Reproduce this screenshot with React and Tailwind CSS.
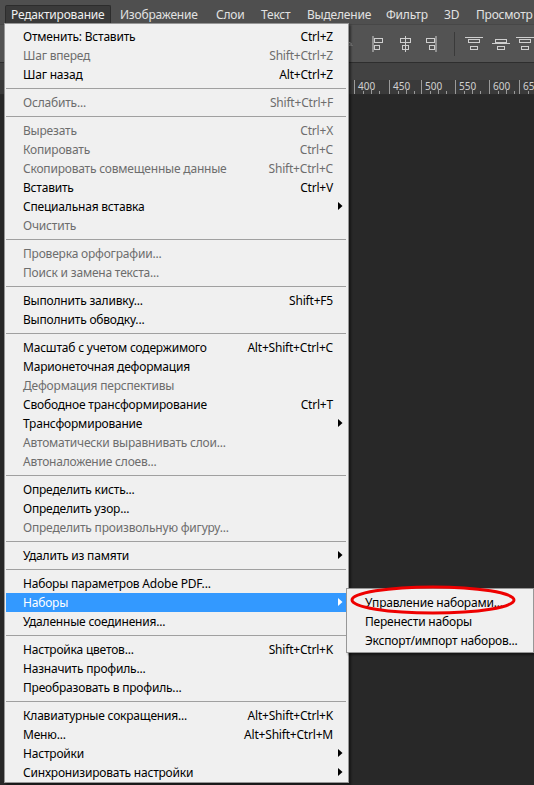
import React from 'react';

const FONT = { fontFamily: '"Noto Sans", "Open Sans", sans-serif' };

const TOP_MENU = [
  { label: 'Редактирование', w: 'w-[106px]', active: true },
  { label: 'Изображение', w: 'w-[96px]' },
  { label: 'Слои', w: 'w-[45px]' },
  { label: 'Текст', w: 'w-[46px]' },
  { label: 'Выделение', w: 'w-[79px]' },
  { label: 'Фильтр', w: 'w-[58px]' },
  { label: '3D', w: 'w-[32px]' },
  { label: 'Просмотр', w: 'w-[80px]' },
];

// '-' = separator; d = disabled; sub = has submenu; hl = highlighted
const EDIT_MENU = [
  { label: 'Отменить: Вставить', key: 'Ctrl+Z' },
  { label: 'Шаг вперед', key: 'Shift+Ctrl+Z', d: true },
  { label: 'Шаг назад', key: 'Alt+Ctrl+Z' },
  '-',
  { label: 'Ослабить...', key: 'Shift+Ctrl+F', d: true },
  '-',
  { label: 'Вырезать', key: 'Ctrl+X', d: true },
  { label: 'Копировать', key: 'Ctrl+C', d: true },
  { label: 'Скопировать совмещенные данные', key: 'Shift+Ctrl+C', d: true },
  { label: 'Вставить', key: 'Ctrl+V' },
  { label: 'Специальная вставка', sub: true },
  { label: 'Очистить', d: true },
  '-',
  { label: 'Проверка орфографии...', d: true },
  { label: 'Поиск и замена текста...', d: true },
  '-',
  { label: 'Выполнить заливку...', key: 'Shift+F5' },
  { label: 'Выполнить обводку...' },
  '-',
  { label: 'Масштаб с учетом содержимого', key: 'Alt+Shift+Ctrl+C' },
  { label: 'Марионеточная деформация' },
  { label: 'Деформация перспективы', d: true },
  { label: 'Свободное трансформирование', key: 'Ctrl+T' },
  { label: 'Трансформирование', sub: true },
  { label: 'Автоматически выравнивать слои...', d: true },
  { label: 'Автоналожение слоев...', d: true },
  '-',
  { label: 'Определить кисть...' },
  { label: 'Определить узор...' },
  { label: 'Определить произвольную фигуру...', d: true },
  '-',
  { label: 'Удалить из памяти', sub: true },
  '-',
  { label: 'Наборы параметров Adobe PDF...' },
  { label: 'Наборы', sub: true, hl: true },
  { label: 'Удаленные соединения...' },
  '-',
  { label: 'Настройка цветов...', key: 'Shift+Ctrl+K' },
  { label: 'Назначить профиль...' },
  { label: 'Преобразовать в профиль...' },
  '-',
  { label: 'Клавиатурные сокращения...', key: 'Alt+Shift+Ctrl+K' },
  { label: 'Меню...', key: 'Alt+Shift+Ctrl+M' },
  { label: 'Настройки', sub: true },
  { label: 'Синхронизировать настройки', sub: true },
];

const SUB_MENU = ['Управление наборами...', 'Перенести наборы', 'Экспорт/импорт наборов...'];

const RULER = [
  { n: '400', x: 'w-[35px]' },
  { n: '450', x: 'w-[32px]' },
  { n: '500', x: 'w-[34px]' },
  { n: '550', x: 'w-[34px]' },
  { n: '600', x: 'w-[30px]' },
  { n: '65', x: 'w-[20px]' },
];

function Arrow({ color }) {
  return (
    <svg width="5" height="8" viewBox="0 0 5 8" className="block">
      <path d="M0 0 L4.5 4 L0 8 Z" fill={color} />
    </svg>
  );
}

function MenuRow({ item }) {
  const text = item.hl ? 'text-white' : item.d ? 'text-[#6d6d6d]' : 'text-black';
  return (
    <div
      className={`flex items-center h-[19px] pl-[17px] whitespace-nowrap ${text} ${
        item.hl ? 'bg-[#3399ff]' : ''
      }`}
    >
      <span className="flex-1">{item.label}</span>
      <span>{item.key ?? ''}</span>
      <span className="w-[13px] flex justify-start pl-[5px] -mt-[2px]">
        {item.sub && <Arrow color={item.hl ? '#ffffff' : '#000000'} />}
      </span>
    </div>
  );
}

function AlignIcon({ variant }) {
  const c = '#cfcfcf';
  if (variant === 'left') {
    return (
      <svg width="13" height="16" viewBox="0 0 13 16">
        <rect x="0.5" y="0" width="1" height="16" fill={c} />
        <rect x="2.5" y="2.5" width="8" height="4" fill="none" stroke={c} />
        <rect x="2.5" y="9.5" width="5" height="4" fill="none" stroke={c} />
      </svg>
    );
  }
  if (variant === 'center') {
    return (
      <svg width="13" height="16" viewBox="0 0 13 16">
        <rect x="6" y="0" width="1" height="16" fill={c} />
        <rect x="1.5" y="2.5" width="10" height="4" fill="none" stroke={c} />
        <rect x="3.5" y="9.5" width="6" height="4" fill="none" stroke={c} />
      </svg>
    );
  }
  if (variant === 'right') {
    return (
      <svg width="13" height="16" viewBox="0 0 13 16">
        <rect x="11.5" y="0" width="1" height="16" fill={c} />
        <rect x="2.5" y="2.5" width="8" height="4" fill="none" stroke={c} />
        <rect x="5.5" y="9.5" width="5" height="4" fill="none" stroke={c} />
      </svg>
    );
  }
  if (variant === 'bars') {
    return (
      <svg width="14" height="16" viewBox="0 0 14 16">
        <rect x="0" y="14" width="14" height="1" fill={c} />
        <rect x="1.5" y="3.5" width="3" height="9" fill="none" stroke={c} />
        <rect x="7.5" y="7.5" width="3" height="5" fill="none" stroke={c} />
      </svg>
    );
  }
  return (
    <svg width="18" height="16" viewBox="0 0 18 16">
      <rect x="0" y={variant === 'dtop' ? 1 : 7} width="18" height="1" fill={c} />
      <rect x="3.5" y="3.5" width="11" height="3" fill="none" stroke={c} />
      <rect x="5.5" y="10.5" width="7" height="3" fill="none" stroke={c} />
    </svg>
  );
}

export default function App() {
  return (
    <div
      className="relative w-[534px] h-[785px] overflow-hidden bg-[#282828] text-[12px] tracking-[-0.2px]"
      style={FONT}
    >
      {/* Menu bar */}
      <div className="flex items-end h-[24px] bg-[#4f4f4f] pl-[5px] text-[#e2e2e2] whitespace-nowrap">
        {TOP_MENU.map((m) => (
          <div
            key={m.label}
            className={`${m.w} shrink-0 h-[19px] flex items-center ${
              m.active
                ? 'pl-[5px] bg-[#3a3a3a] border border-b-0 border-[#2c2c2c] rounded-t-[2px] text-[#f0f0f0]'
                : 'pl-[9px]'
            }`}
          >
            {m.label}
          </div>
        ))}
      </div>

      {/* Options bar */}
      <div className="flex items-center h-[38px] bg-[#535353] border-t border-[#474747] pl-[349px]">
        <AlignIcon variant="bars" />
        <div className="ml-[19px]">
          <AlignIcon variant="left" />
        </div>
        <div className="ml-[14px]">
          <AlignIcon variant="center" />
        </div>
        <div className="ml-[12px]">
          <AlignIcon variant="right" />
        </div>
        <div className="ml-[17px] w-px h-[24px] bg-[#3a3a3a]" />
        <div className="ml-[11px]">
          <AlignIcon variant="dtop" />
        </div>
        <div className="ml-[9px]">
          <AlignIcon variant="dmid" />
        </div>
        <div className="ml-[6px]">
          <AlignIcon variant="dtop" />
        </div>
      </div>

      {/* Tab strip */}
      <div className="h-[18px] bg-[#424242] border-t border-[#2e2e2e]" />

      {/* Ruler */}
      <div className="flex h-[15px] bg-[#3a3a3a] border-b border-[#2a2a2a] pl-[354px] text-[10px] text-[#d0d0d0] leading-[12px] tracking-normal">
        {RULER.map((r) => (
          <div key={r.n} className={`${r.x} shrink-0 border-l border-[#9a9a9a] pl-[3px] relative`}>
            {r.n}
            <div className="absolute bottom-0 left-[8px] w-px h-[3px] bg-[#9a9a9a]" />
            <div className="absolute bottom-0 left-[16px] w-px h-[5px] bg-[#9a9a9a]" />
            <div className="absolute bottom-0 left-[24px] w-px h-[3px] bg-[#9a9a9a]" />
          </div>
        ))}
      </div>

      {/* Edit dropdown */}
      <div className="absolute left-[4px] top-[23px] w-[345px] h-[760px] bg-[#f0f0f0] border border-[#979797] shadow-[2px_2px_2px_rgba(0,0,0,0.45)] pl-[1px] pr-[2px] pt-[3px]">
        {EDIT_MENU.map((item, i) =>
          item === '-' ? (
            <div key={i} className="h-[9px] flex items-center">
              <div className="w-full h-px bg-[#a0a0a0]" />
            </div>
          ) : (
            <MenuRow key={i} item={item} />
          )
        )}
      </div>

      {/* Наборы submenu */}
      <div className="absolute left-[346px] top-[588px] w-[188px] h-[65px] bg-[#f0f0f0] border border-[#979797] shadow-[2px_2px_2px_rgba(0,0,0,0.45)] pt-[4px] px-[1px]">
        {SUB_MENU.map((s) => (
          <div key={s} className="h-[19px] flex items-center pl-[17px] whitespace-nowrap text-black">
            {s}
          </div>
        ))}
      </div>

      {/* Red annotation ellipse */}
      <svg className="absolute left-[346px] top-[583px]" width="176" height="36" viewBox="0 0 176 36">
        <ellipse cx="87" cy="17" rx="81" ry="13" fill="none" stroke="#ee0000" strokeWidth="3" />
      </svg>
    </div>
  );
}
